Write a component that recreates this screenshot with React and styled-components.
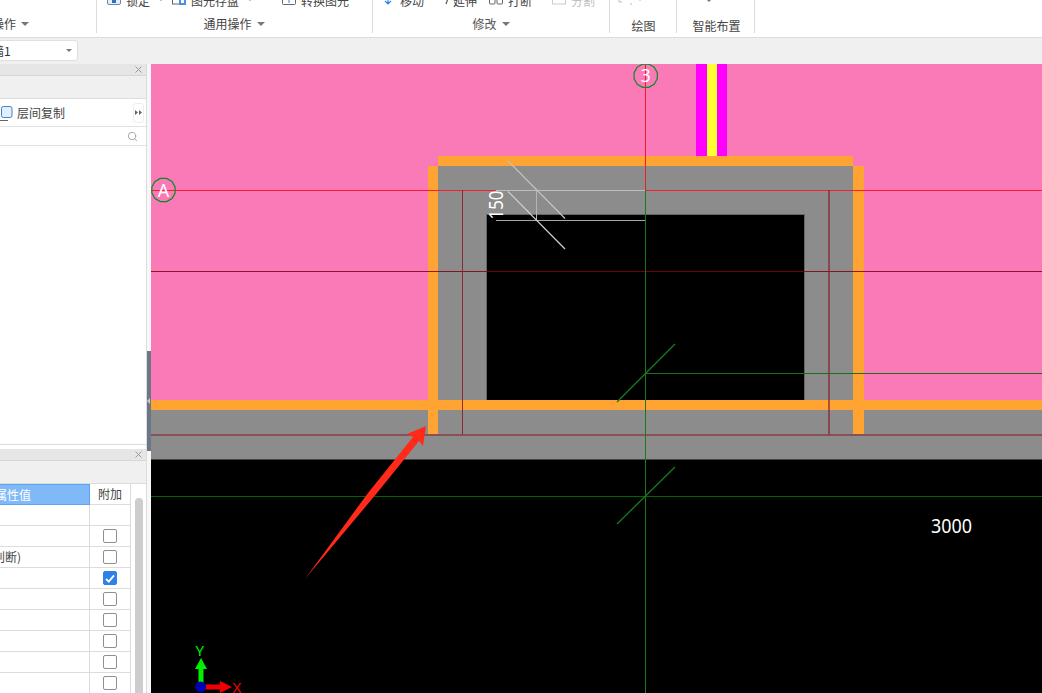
import React from "react";
import styled, { createGlobalStyle } from "styled-components";
import { Search } from "lucide-react";

const GlobalStyle = createGlobalStyle`
  html, body {
    margin: 0;
    padding: 0;
    background: #f0f0f0;
  }
  body {
    font-family: "Noto Sans CJK SC", "Liberation Sans", sans-serif;
    font-size: 12px;
    color: #444;
    overflow: hidden;
  }
`;

const ROWS = [
  { box: null },
  { box: false },
  { text: "判断)", box: false },
  { box: true },
  { box: false },
  { box: false },
  { box: false },
  { box: false },
  { box: false },
];

// 12-sided ring, the CAD axis bubbles are not quite round
const ring = (cx, cy, r) =>
  Array.from({ length: 12 }, (_, i) => {
    const a = (i * Math.PI) / 6 + Math.PI / 12;
    return `${(cx + r * Math.cos(a)).toFixed(1)},${(cy + r * Math.sin(a)).toFixed(1)}`;
  }).join(" ");

// only the bottom few pixels of these show under the ribbon edge
const TOOL_ICONS = {
  lock: (
    <>
      <rect x="0.5" y="0.5" width="13" height="13" rx="1.5" fill="#e6eefa" stroke="#6f86a8" />
      <rect x="5" y="6" width="4" height="6" fill="#2f6fc4" />
    </>
  ),
  save: (
    <>
      <rect x="0.5" y="0.5" width="9" height="12.5" fill="#fff" stroke="#666" />
      <rect x="7" y="7" width="7" height="7" fill="#4a90e2" />
      <rect x="9" y="9" width="3" height="3" fill="#fff" />
    </>
  ),
  convert: (
    <>
      <rect x="0.5" y="0.5" width="13" height="13" rx="1" fill="#fff" stroke="#666" />
      <path d="M7 12V7M5 9L7 7L9 9" stroke="#3f7fd0" fill="none" />
    </>
  ),
  move: <path d="M7 4V13M4 10L7 13L10 10M1 8H4M10 8H13" stroke="#2f86e6" strokeWidth="1.2" fill="none" />,
  extend: <path d="M1 13L3.5 6" stroke="#555" strokeWidth="1.2" fill="none" />,
  split: (
    <>
      <rect x="0.5" y="0.5" width="5.5" height="12.5" rx="1" fill="#fff" stroke="#666" />
      <rect x="8" y="0.5" width="5.5" height="12.5" rx="1" fill="#fff" stroke="#666" />
    </>
  ),
  cut: (
    <>
      <rect x="0.5" y="0.5" width="13" height="12.5" fill="#fff" stroke="#ccc" />
      <path d="M5 9L10 5" stroke="#ccc" fill="none" />
    </>
  ),
  draw: <path d="M2 11V6M2 11H5M13 13H15M23 8V10" stroke="#bbb" fill="none" />,
};

function Tool({ w, icon, iconW = 14, gap = 5, label, caret, disabled }) {
  return (
    <ToolItem $w={w} $gap={gap} $disabled={disabled}>
      <IconSvg width={iconW} height="14" viewBox={`0 0 ${iconW} 14`}>
        {TOOL_ICONS[icon]}
      </IconSvg>
      {label && <span>{label}</span>}
      {caret && <TinyCaret />}
    </ToolItem>
  );
}

function CloseMark() {
  return (
    <svg width="7" height="7" viewBox="0 0 7 7">
      <path d="M0.5 0.5L6.5 6.5M6.5 0.5L0.5 6.5" stroke="#999" strokeWidth="1" fill="none" />
    </svg>
  );
}

function CadDrawing() {
  return (
    <CadSvg viewBox="151 64 891 629" width="891" height="629">
      <rect x="151" y="64" width="891" height="629" fill="#000" />
      <rect x="151" y="64" width="891" height="336" fill="#fa7ab8" />

      <rect x="696" y="64" width="11" height="92" fill="#ff00ff" />
      <rect x="707" y="64" width="10" height="92" fill="#ffff33" />
      <rect x="717" y="64" width="10" height="92" fill="#ff00ff" />

      <rect x="438" y="166" width="415" height="234" fill="#8c8c8c" />
      <rect x="486.5" y="214.5" width="318" height="190" fill="#000" stroke="#666" />
      <rect x="151" y="410" width="891" height="49" fill="#8c8c8c" />
      <rect x="151" y="459" width="891" height="1" fill="#444" />

      <rect x="151" y="400" width="891" height="10" fill="#ffa333" />
      <rect x="438" y="156" width="415" height="10" fill="#ffa333" />
      <rect x="428" y="166" width="10" height="268" fill="#ffa333" />
      <rect x="853" y="166" width="11" height="268" fill="#ffa333" />

      <line x1="151" y1="190.5" x2="496" y2="190.5" stroke="#f5222d" strokeWidth="1.2" />
      <line x1="646" y1="190.5" x2="1042" y2="190.5" stroke="#f5222d" strokeWidth="1.2" />
      <line x1="151" y1="271.5" x2="1042" y2="271.5" stroke="#800010" strokeOpacity="0.85" strokeWidth="1.2" />
      <line x1="462.5" y1="190" x2="462.5" y2="435" stroke="#8a2030" strokeOpacity="0.9" />
      <line x1="829" y1="190" x2="829" y2="435" stroke="#8a2030" strokeOpacity="0.85" strokeWidth="1.5" />
      <line x1="151" y1="435" x2="1042" y2="435" stroke="#8a3c46" strokeWidth="1.5" />

      <line x1="645.5" y1="64" x2="645.5" y2="190" stroke="#f01c2c" />
      <line x1="645.5" y1="190" x2="645.5" y2="693" stroke="#1a7a1a" />
      <line x1="646" y1="373.5" x2="1042" y2="373.5" stroke="#1a701a" strokeWidth="1.2" />
      <line x1="151" y1="496.5" x2="1042" y2="496.5" stroke="#006400" strokeWidth="1.2" />
      <line x1="617" y1="402" x2="675" y2="344" stroke="#1a7a1a" strokeWidth="1.3" />
      <line x1="617" y1="524" x2="675" y2="467" stroke="#1a7a1a" strokeWidth="1.3" />

      <line x1="496" y1="190.5" x2="645" y2="190.5" stroke="#bdbdbd" />
      <line x1="496" y1="220.5" x2="645" y2="220.5" stroke="#a8a8a8" />
      <line x1="536.5" y1="190" x2="536.5" y2="221" stroke="#b5b5b5" />
      <line x1="508" y1="161" x2="565" y2="218.5" stroke="#c4c4c4" strokeWidth="1.2" />
      <line x1="508" y1="191.5" x2="565" y2="249" stroke="#d0d0d0" strokeWidth="1.2" />

      <CadText
        x="0"
        y="0"
        transform="translate(503 219.5) rotate(-90)"
        fontSize="20"
        textLength="29"
        lengthAdjust="spacingAndGlyphs"
      >
        150
      </CadText>
      <CadText x="931" y="533" fontSize="19.5" textLength="41" lengthAdjust="spacingAndGlyphs">
        3000
      </CadText>

      <polygon points={ring(163.5, 190, 12)} fill="none" stroke="#0a8a20" strokeWidth="1.2" />
      <CadText x="163.5" y="196.5" fontSize="18" textAnchor="middle">A</CadText>
      <polygon points={ring(645.7, 75.7, 12)} fill="none" stroke="#0a8a20" strokeWidth="1.2" />
      <CadText x="645.7" y="82" fontSize="18" textAnchor="middle">3</CadText>

      <polygon
        points="305,579 368,493 413,437 407,434 426,426 423,446 419,441 377,493"
        fill="#ff2a1a"
      />

      <rect x="198.5" y="667" width="5" height="16" fill="#00f000" />
      <polygon points="201,658 207,669 195,669" fill="#00f000" />
      <rect x="205" y="684.5" width="16" height="5" fill="#f00000" />
      <polygon points="232,687 220,681 220,693" fill="#f00000" />
      <circle cx="200.7" cy="687" r="5.5" fill="#0000b0" />
      <AxisText x="195.5" y="656" fontSize="15" fill="#00f000">Y</AxisText>
      <AxisText x="232.5" y="693" fontSize="15" fill="#f00000">X</AxisText>
    </CadSvg>
  );
}

export default function App() {
  return (
    <Page>
      <GlobalStyle />
      <Ribbon>
        <Group $w={97}>
          <ToolRow />
          <GroupLabel $clip>
            操作
            <Caret />
          </GroupLabel>
        </Group>
        <Group $w={276}>
          <ToolRow $pad={10}>
            <Tool w={65} icon="lock" label="锁定" caret />
            <Tool w={110} icon="save" label="图元存盘" caret />
            <Tool w={70} icon="convert" label="转换图元" />
          </ToolRow>
          <GroupLabel $nudge={-1}>
            通用操作
            <Caret />
          </GroupLabel>
        </Group>
        <Group $w={237}>
          <ToolRow $pad={8}>
            <Tool w={64} icon="move" label="移动" />
            <Tool w={44} icon="extend" iconW={4} gap={4} label="延伸" />
            <Tool w={63} icon="split" label="打断" />
            <Tool w={50} icon="cut" label="分割" disabled />
          </ToolRow>
          <GroupLabel $muted>
            修改
            <Caret />
          </GroupLabel>
        </Group>
        <Group $w={67}>
          <ToolRow $pad={7}>
            <Tool w={24} icon="draw" iconW={24} disabled />
          </ToolRow>
          <GroupLabel $low $nudge={1}>绘图</GroupLabel>
        </Group>
        <Group $w={78}>
          <ToolRow $pad={28}>
            <Caret />
          </ToolRow>
          <GroupLabel $low $nudge={2}>智能布置</GroupLabel>
        </Group>
      </Ribbon>

      <OptionBar>
        <Combo>
          <ComboText>墙1</ComboText>
          <Caret $small />
        </Combo>
      </OptionBar>

      <Workspace>
        <Sidebar>
          <TopPanel>
            <PanelTitle>
              <CloseMark />
            </PanelTitle>
            <PanelStrip />
            <CopyBar>
              <CopyIcon width="13" height="15" viewBox="0 0 13 15">
                <path d="M0 14.5H8" stroke="#666" fill="none" />
                <rect x="1.5" y="0.5" width="10.5" height="11" rx="2" fill="#e3effb" stroke="#3f7fd0" />
              </CopyIcon>
              <CopyLabel>层间复制</CopyLabel>
              <ExpandButton>
                <svg width="7" height="5" viewBox="0 0 7 5">
                  <path d="M0 0L3 2.5L0 5ZM4 0L7 2.5L4 5Z" fill="#666" />
                </svg>
              </ExpandButton>
            </CopyBar>
            <SearchBar>
              <Search size={11} color="#a0a0a0" strokeWidth={2} />
            </SearchBar>
            <PanelBody />
          </TopPanel>

          <BottomPanel>
            <PanelTitle>
              <CloseMark />
            </PanelTitle>
            <PanelStrip />
            <TableWrap>
              <PropTable>
                <HeadValue>属性值</HeadValue>
                <HeadExtra>附加</HeadExtra>
                {ROWS.map((row, i) => (
                  <React.Fragment key={i}>
                    <ValueCell>{row.text}</ValueCell>
                    <ExtraCell>
                      {row.box !== null && (
                        <CheckBox $on={row.box}>
                          {row.box && (
                            <svg width="10" height="9" viewBox="0 0 10 9">
                              <path d="M1 5L3.8 7.6L9 1.4" stroke="#fff" strokeWidth="1.8" fill="none" />
                            </svg>
                          )}
                        </CheckBox>
                      )}
                    </ExtraCell>
                  </React.Fragment>
                ))}
              </PropTable>
              <ScrollTrack>
                <ScrollThumb />
              </ScrollTrack>
            </TableWrap>
          </BottomPanel>
        </Sidebar>

        <Gutter>
          <GutterHandle />
        </Gutter>

        <Canvas>
          <CadDrawing />
        </Canvas>
      </Workspace>
    </Page>
  );
}

const Page = styled.div`
  width: 1042px;
  height: 693px;
  overflow: hidden;
  display: flex;
  flex-direction: column;
  background: #f0f0f0;
`;

const Ribbon = styled.div`
  height: 37px;
  flex: none;
  display: flex;
  align-items: flex-start;
  background: #fff;
  border-bottom: 1px solid #dcdcdc;
  overflow: hidden;
`;

const Group = styled.div`
  width: ${(p) => p.$w}px;
  height: 33px;
  box-sizing: border-box;
  flex: none;
  display: flex;
  flex-direction: column;
  border-right: 1px solid #dcdcdc;
`;

const ToolRow = styled.div`
  height: 14px;
  margin-top: -7px;
  padding-left: ${(p) => p.$pad || 0}px;
  display: flex;
  align-items: center;
  flex: none;
`;

const ToolItem = styled.div`
  width: ${(p) => p.$w}px;
  flex: none;
  display: flex;
  align-items: center;
  gap: ${(p) => p.$gap}px;
  white-space: nowrap;
  color: ${(p) => (p.$disabled ? "#c0c0c0" : "#444")};
`;

const IconSvg = styled.svg`
  flex: none;
  margin-top: -4px;
`;

const TinyCaret = styled.i`
  width: 0;
  height: 0;
  margin-left: 4px;
  border-left: 2px solid transparent;
  border-right: 2px solid transparent;
  border-top: 2px solid #888;
`;

const GroupLabel = styled.div`
  height: 18px;
  line-height: 18px;
  margin-top: ${(p) => (p.$low ? "10px" : "8px")};
  margin-left: ${(p) => (p.$clip ? "-8px" : `${p.$nudge || 0}px`)};
  display: flex;
  align-items: center;
  justify-content: ${(p) => (p.$clip ? "flex-start" : "center")};
  gap: 5px;
  color: ${(p) => (p.$muted ? "#555" : "#444")};
  white-space: nowrap;
`;

const Caret = styled.i`
  width: 0;
  height: 0;
  flex: none;
  border-left: ${(p) => (p.$small ? "3px" : "4px")} solid transparent;
  border-right: ${(p) => (p.$small ? "3px" : "4px")} solid transparent;
  border-top: ${(p) => (p.$small ? "3px" : "4px")} solid #777;
`;

const OptionBar = styled.div`
  height: 26px;
  flex: none;
  padding-top: 2px;
  box-sizing: border-box;
  background: #f0f0f0;
`;

const Combo = styled.div`
  width: 78px;
  height: 21px;
  box-sizing: border-box;
  display: flex;
  align-items: center;
  justify-content: space-between;
  padding-right: 5px;
  background: #fff;
  border: 1px solid #e0e0e0;
  border-left: none;
  border-radius: 0 4px 4px 0;
`;

const ComboText = styled.span`
  margin-left: -8px;
  color: #333;
`;

const Workspace = styled.div`
  flex: 1;
  min-height: 0;
  display: flex;
`;

const Sidebar = styled.div`
  width: 147px;
  flex: none;
  display: flex;
  flex-direction: column;
  box-sizing: border-box;
  background: #fff;
  border-right: 1px solid #dcdcdc;
`;

const TopPanel = styled.div`
  height: 385px;
  flex: none;
  display: flex;
  flex-direction: column;
`;

const BottomPanel = styled.div`
  flex: 1;
  min-height: 0;
  display: flex;
  flex-direction: column;
`;

const PanelTitle = styled.div`
  height: 12px;
  flex: none;
  box-sizing: border-box;
  display: flex;
  align-items: center;
  justify-content: flex-end;
  padding-right: 4px;
  background: #e6e6e6;
  border-bottom: 1px solid #d6d6d6;
`;

const PanelStrip = styled.div`
  height: 23px;
  flex: none;
  box-sizing: border-box;
  background: #f0f0f0;
  border-bottom: 1px solid #dcdcdc;
`;

const CopyBar = styled.div`
  height: 28px;
  flex: none;
  box-sizing: border-box;
  display: flex;
  align-items: center;
  padding-right: 2px;
  background: #fff;
  border-bottom: 1px solid #e2e2e2;
`;

const CopyIcon = styled.svg`
  flex: none;
  margin-top: 1px;
`;

const CopyLabel = styled.span`
  margin-left: 4px;
  flex: 1;
  color: #444;
`;

const ExpandButton = styled.div`
  width: 11px;
  height: 20px;
  box-sizing: border-box;
  display: flex;
  align-items: center;
  justify-content: center;
  border: 1px solid #eee;
  border-radius: 3px;
`;

const SearchBar = styled.div`
  height: 19px;
  flex: none;
  box-sizing: border-box;
  display: flex;
  align-items: center;
  justify-content: flex-end;
  padding-right: 8px;
  background: #fff;
  border-bottom: 1px solid #e2e2e2;
`;

const PanelBody = styled.div`
  flex: 1;
  margin-bottom: 4px;
  background: #fff;
  border-bottom: 1px solid #dcdcdc;
`;

const TableWrap = styled.div`
  flex: 1;
  min-height: 0;
  display: flex;
  overflow: hidden;
`;

const PropTable = styled.div`
  width: 131px;
  flex: none;
  display: grid;
  grid-template-columns: 90px 41px;
  grid-auto-rows: 21px;
  align-content: start;
`;

const HeadValue = styled.div`
  box-sizing: border-box;
  line-height: 19px;
  color: #fff;
  font-size: 12px;
  text-indent: -5px;
  background: #7fb9f8;
  border: 1px solid #5ea3ef;
  border-left: none;
`;

const HeadExtra = styled.div`
  box-sizing: border-box;
  text-align: center;
  line-height: 20px;
  color: #444;
  border-bottom: 1px solid #dcdcdc;
  border-right: 1px solid #dcdcdc;
`;

const ValueCell = styled.div`
  box-sizing: border-box;
  line-height: 20px;
  text-indent: -7px;
  color: #444;
  border-bottom: 1px solid #dcdcdc;
  border-right: 1px solid #dcdcdc;
`;

const ExtraCell = styled.div`
  box-sizing: border-box;
  display: flex;
  align-items: center;
  justify-content: center;
  border-bottom: 1px solid #dcdcdc;
  border-right: 1px solid #dcdcdc;
`;

const CheckBox = styled.div`
  width: 14px;
  height: 14px;
  box-sizing: border-box;
  display: flex;
  align-items: center;
  justify-content: center;
  border-radius: 2px;
  background: ${(p) => (p.$on ? "#2f80e8" : "#fff")};
  border: 1px solid ${(p) => (p.$on ? "#2f80e8" : "#8f8f8f")};
`;

const ScrollTrack = styled.div`
  flex: 1;
  padding: 14px 3px 0 4px;
`;

const ScrollThumb = styled.div`
  height: 300px;
  background: #cdcdcd;
  border-radius: 4px;
`;

const Gutter = styled.div`
  width: 4px;
  flex: none;
  padding-top: 287px;
  box-sizing: border-box;
  background: #f7f7f7;
`;

const GutterHandle = styled.div`
  height: 100px;
  display: flex;
  align-items: center;
  background: #6b7785;
  &::before {
    content: "";
    width: 0;
    height: 0;
    border-top: 3px solid transparent;
    border-bottom: 3px solid transparent;
    border-right: 3px solid #c8ccd0;
  }
`;

const Canvas = styled.div`
  flex: 1;
  min-width: 0;
  background: #000;
`;

const CadSvg = styled.svg`
  display: block;
`;

const CadText = styled.text`
  font-family: "Noto Sans", "Liberation Sans", sans-serif;
  fill: #fff;
`;

const AxisText = styled.text`
  font-family: "Noto Sans", "Liberation Sans", sans-serif;
`;
